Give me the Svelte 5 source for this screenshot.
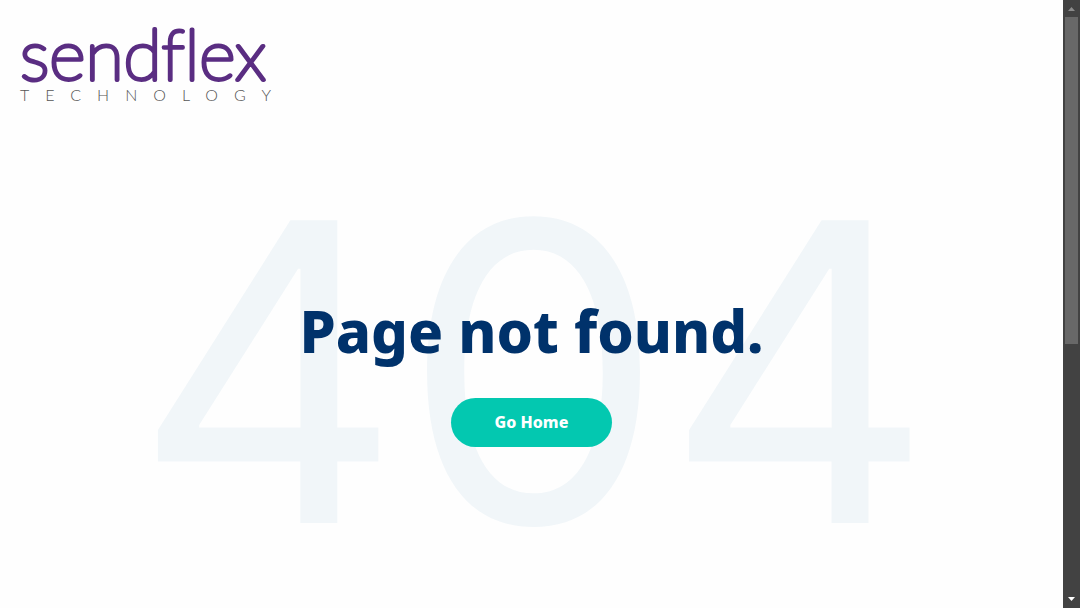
<script>
  const title = 'Page not found.';
</script>

<div class="window">
  <div class="page">
    <header>
      <a class="brand" href="/" aria-label="sendflex technology">
        <svg width="256" height="84" viewBox="0 0 256 84">
          <text class="word" x="0" y="59">sendflex</text>
          <text class="tag" x="0" y="80">TECHNOLOGY</text>
        </svg>
      </a>
    </header>
    <main>
      <div class="code">404</div>
      <div class="message">
        <h1>{title}</h1>
        <a class="home" href="/">Go Home</a>
      </div>
    </main>
  </div>
  <div class="scrollbar">
    <svg width="17" height="17" viewBox="0 0 17 17"><path d="M5 11 8.500 7 12 11Z" fill="#8b8b8b" /></svg>
    <div class="track"><div class="thumb"></div></div>
    <svg width="17" height="17" viewBox="0 0 17 17"><path d="M5 6h7l-3.500 4Z" fill="#fff" /></svg>
  </div>
</div>

<style>
  :global(body) {
    margin: 0;
    background: #fefefe;
  }
  .window {
    display: flex;
    height: 100vh;
    overflow: hidden;
    font-family: 'Noto Sans', sans-serif;
  }
  .page {
    flex: 1;
    display: flex;
    flex-direction: column;
    min-width: 0;
  }
  header {
    padding: 21px 20px 0;
  }
  .brand,
  .brand svg {
    display: block;
    width: max-content;
    overflow: visible;
  }
  .word {
    font: 100 70px Lato, sans-serif;
    font-variant-ligatures: none;
    fill: #5a2d82;
    stroke: #5a2d82;
    stroke-width: 4px;
    stroke-linejoin: round;
  }
  .tag {
    font: 300 16px Lato, sans-serif;
    letter-spacing: 16px;
    fill: #555;
  }
  main {
    flex: 1;
    display: grid;
    place-items: center;
    min-height: 0;
    padding-top: 30px;
  }
  main > * {
    grid-area: 1 / 1;
  }
  .code {
    font: 400 416px/440px Inter, sans-serif;
    color: #f1f6f9;
    padding-left: 4px;
  }
  .message {
    display: flex;
    flex-direction: column;
    align-items: center;
    gap: 28px;
    padding-bottom: 4px;
    z-index: 1;
  }
  h1 {
    margin: 0;
    font-size: 58px;
    line-height: 78px;
    font-weight: 800;
    color: #00326b;
    text-align: center;
  }
  .home {
    padding: 12px 44px 13px;
    border-radius: 25px;
    background: #03c8b0;
    color: #fff;
    font-size: 16px;
    line-height: 24px;
    font-weight: 800;
    text-decoration: none;
  }
  .scrollbar {
    width: 17px;
    display: flex;
    flex-direction: column;
    background: #424242;
  }
  .track {
    flex: 1;
    padding: 0 2px;
  }
  .thumb {
    height: 57%;
    background: #686868;
  }
</style>
